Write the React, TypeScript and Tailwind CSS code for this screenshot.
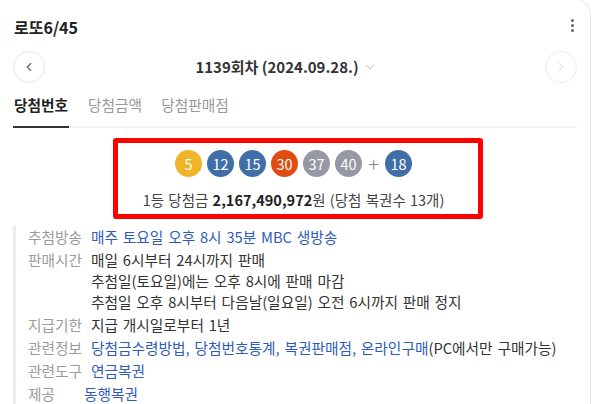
import { ChevronLeft, ChevronRight, ChevronDown } from 'lucide-react';

const balls = [
  { n: 5, color: 'bg-[#f0b429]' },
  { n: 12, color: 'bg-[#3f6ea8]' },
  { n: 15, color: 'bg-[#3f6ea8]' },
  { n: 30, color: 'bg-[#df4d12]' },
  { n: 37, color: 'bg-[#9698a5]' },
  { n: 40, color: 'bg-[#9698a5]' },
];

function Ball({ n, color }: { n: number; color: string }) {
  return (
    <span
      className={`flex h-[27px] w-[27px] items-center justify-center rounded-full text-[14.5px] text-white ${color}`}
    >
      {n}
    </span>
  );
}

function Row({
  label,
  labelWidth = 'w-[63px]',
  children,
}: {
  label: string;
  labelWidth?: string;
  children: React.ReactNode;
}) {
  return (
    <div className="flex">
      <span className={`${labelWidth} shrink-0 text-[#9b9b9b]`}>{label}</span>
      <div>{children}</div>
    </div>
  );
}

export default function App() {
  return (
    <div className="relative h-[404px] w-[600px] overflow-hidden bg-white font-['Noto_Sans_CJK_KR',sans-serif] text-[#333]">
      <div className="-mt-px h-[420px] w-[591px] rounded-tr-[16px] border-r border-t border-[#ebebeb]">
        {/* header */}
        <div className="flex h-[51px] items-start justify-between pl-[14px] pr-[16px] pt-[17px]">
          <h2 className="text-[16px] font-bold leading-[20px] text-[#222]">로또6/45</h2>
          <div className="mt-[1px] flex flex-col gap-[2px] pt-[1px]">
            <span className="h-[3px] w-[3px] rounded-full bg-[#666]" />
            <span className="h-[3px] w-[3px] rounded-full bg-[#666]" />
            <span className="h-[3px] w-[3px] rounded-full bg-[#666]" />
          </div>
        </div>

        {/* round selector */}
        <div className="flex h-[32px] items-center justify-between px-[13px]">
          <button className="flex h-[32px] w-[32px] items-center justify-center rounded-full border border-[#e6e6e6]">
            <ChevronLeft className="h-[14px] w-[14px] text-[#666]" strokeWidth={2} />
          </button>
          <div className="flex flex-1 items-center justify-center pr-[18px]">
            <span className="text-[15px] font-bold text-[#333]">1139회차 (2024.09.28.)</span>
            <ChevronDown className="ml-[4px] h-[14px] w-[14px] text-[#aaa]" strokeWidth={1.5} />
          </div>
          <button className="flex h-[32px] w-[32px] items-center justify-center rounded-full border border-[#ececec]">
            <ChevronRight className="h-[14px] w-[14px] text-[#ccc]" strokeWidth={1.5} />
          </button>
        </div>

        {/* tabs */}
        <div className="mx-[13px] mt-[12px] flex gap-[19px] border-b-2 border-[#f0f3f5] text-[14.7px] leading-[20px]">
          <span className="-mb-[2px] border-b-2 border-[#333] px-px pb-[11px] font-bold text-[#222]">당첨번호</span>
          <span className="pb-[11px] text-[#999]">당첨금액</span>
          <span className="pb-[11px] text-[#999]">당첨판매점</span>
        </div>

        {/* result */}
        <div className="flex flex-col items-center pt-[22px] pr-[3px]">
          <div className="flex h-[27px] items-center gap-[5px]">
            {balls.map((b) => (
              <Ball key={b.n} {...b} />
            ))}
            <span className="w-[13px] text-center text-[20px] font-light leading-none text-[#888]">+</span>
            <Ball n={18} color="bg-[#3f6ea8]" />
          </div>
          <p className="mt-[13px] text-[14.5px] leading-[20px] text-[#444] [word-spacing:1px]">
            1등 당첨금 <b className="font-bold text-[#222]">2,167,490,972</b>원 (당첨 복권수 13개)
          </p>
        </div>

        {/* info */}
        <div className="ml-[13px] mt-[16px] flex flex-col gap-[2px] border-l-[3px] border-[#ececec] pl-[12px] text-[14.7px] leading-[21px] [word-spacing:1.5px]">
          <Row label="추첨방송">
            <span className="text-[#2e5cb8]">매주 토요일 오후 8시 35분 MBC 생방송</span>
          </Row>
          <Row label="판매시간">
            <p>매일 6시부터 24시까지 판매</p>
            <p>추첨일(토요일)에는 오후 8시에 판매 마감</p>
            <p>추첨일 오후 8시부터 다음날(일요일) 오전 6시까지 판매 정지</p>
          </Row>
          <Row label="지급기한">
            <span>지급 개시일로부터 1년</span>
          </Row>
          <Row label="관련정보">
            <span className="text-[#2e5cb8]">당첨금수령방법, 당첨번호통계, 복권판매점, 온라인구매</span>
            <span>(PC에서만 구매가능)</span>
          </Row>
          <Row label="관련도구">
            <span className="text-[#2e5cb8]">연금복권</span>
          </Row>
          <Row label="제공" labelWidth="w-[56px]">
            <span className="text-[#2e5cb8]">동행복권</span>
          </Row>
        </div>
      </div>

      {/* red highlight annotation */}
      <div className="pointer-events-none absolute left-[113px] top-[138px] h-[81px] w-[370px] rounded-[3px] border-[5px] border-[#ff0000]" />
    </div>
  );
}
